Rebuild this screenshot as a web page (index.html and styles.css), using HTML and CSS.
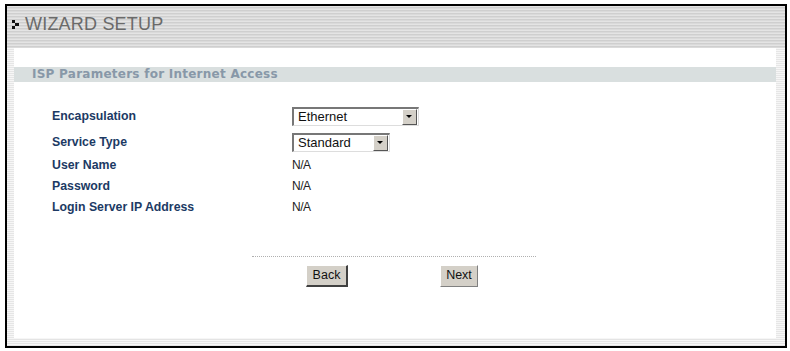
FILE: index.html
```html
<!DOCTYPE html>
<html>
<head>
<meta charset="utf-8">
<link rel="stylesheet" href="styles.css">
</head>
<body>
<div class="frame">
  <div class="header">
    <svg class="icon" width="7" height="9" viewBox="0 0 7 9"><rect x="0" y="0" width="3" height="3" fill="#111"/><rect x="3" y="3" width="4" height="3" fill="#111"/><rect x="0" y="6" width="3" height="3" fill="#111"/></svg>
    <span class="title">WIZARD SETUP</span>
  </div>
  <div class="body">
    <div class="side"></div>
    <div class="main">
      <div class="section">ISP Parameters for Internet Access</div>
      <div class="form">
        <div class="row r1"><span class="label">Encapsulation</span><span class="sel w1">Ethernet<span class="arrow"></span></span></div>
        <div class="row r2"><span class="label">Service Type</span><span class="sel w2">Standard<span class="arrow"></span></span></div>
        <div class="row r3"><span class="label">User Name</span><span class="val">N/A</span></div>
        <div class="row r4"><span class="label">Password</span><span class="val">N/A</span></div>
        <div class="row r5"><span class="label">Login Server IP Address</span><span class="val">N/A</span></div>
      </div>
      <div class="dots"></div>
      <div class="buttons">
        <span class="btn back">Back</span>
        <span class="btn next">Next</span>
      </div>
    </div>
    <div class="side right"></div>
  </div>
  <div class="footer"></div>
</div>
</body>
</html>
```
FILE: styles.css
```css
html, body { margin: 0; padding: 0; background: #fff; }
body { width: 790px; height: 351px; overflow: hidden; }
.frame {
  position: relative;
  margin: 4px 0 0 5px;
  width: 778px;
  height: 340px;
  border: 2px solid #000;
  display: flex;
  flex-direction: column;
  font-family: "Liberation Sans", Arial, sans-serif;
}
.header {
  height: 42px;
  background: repeating-linear-gradient(to bottom, #e4e4e4 0px, #e4e4e4 1px, #cfcfcf 1px, #cfcfcf 2px, #dadada 2px, #dadada 3px);
  display: flex;
  align-items: flex-start;
  padding: 9px 0 0 5px;
  box-sizing: border-box;
}
.icon { margin-top: 5px; margin-right: 6px; }
.title { font-size: 18px; color: #6a6a6a; line-height: 18px; letter-spacing: 0.2px; }
.body { flex: 1; display: flex; }
.side {
  width: 7px;
  background: repeating-linear-gradient(to bottom, #f6f6f6 0px, #f6f6f6 1px, #e6e6e6 1px, #e6e6e6 2px);
}
.side.right { width: 9px; }
.main { flex: 1; background: #fff; display: flex; flex-direction: column; }
.section {
  margin-top: 19px;
  height: 15px;
  background: #d9dfdf;
  font-family: "DejaVu Sans", Verdana, sans-serif;
  font-weight: bold;
  font-size: 12px;
  line-height: 15px;
  color: #8898a8;
  padding-left: 18px;
  letter-spacing: 0.25px;
}
.form { padding-left: 38px; margin-top: 24px; }
.row { display: flex; align-items: center; }
.label { width: 240px; font-weight: bold; font-size: 12.3px; color: #1c3a64; }
.r1 { height: 20px; }
.r2 { height: 20px; margin-top: 6px; }
.r3 { height: 14px; margin-top: 6px; }
.r4, .r5 { height: 14px; margin-top: 7px; }
.val { font-size: 12px; color: #222; letter-spacing: -0.5px; }
.sel {
  position: relative;
  height: 19px;
  box-sizing: border-box;
  border-top: 2px solid #777;
  border-left: 2px solid #777;
  border-right: 1px solid #ddd;
  border-bottom: 1px solid #ddd;
  font-size: 13px;
  line-height: 16px;
  padding-left: 4px;
  color: #111;
  background: #fff;
}
.w1 { width: 127px; }
.w2 { width: 98px; }
.arrow {
  position: absolute;
  right: 1px;
  top: 0px;
  width: 15px;
  height: 16px;
  box-sizing: border-box;
  background: #d4d0c8;
  border-top: 1px solid #fff;
  border-left: 1px solid #fff;
  border-right: 1px solid #555;
  border-bottom: 1px solid #555;
}
.arrow::after {
  content: "";
  position: absolute;
  left: 3px;
  top: 5px;
  border-left: 3px solid transparent;
  border-right: 3px solid transparent;
  border-top: 3px solid #000;
}
.dots {
  margin: 42px 0 0 238px;
  width: 284px;
  height: 0;
  border-top: 1px dotted #b0b0b0;
}
.buttons { display: flex; margin-top: 8px; padding-left: 292px; }
.btn {
  box-sizing: border-box;
  height: 22px;
  background: #d4d0c8;
  border-top: 1px solid #fff;
  border-left: 1px solid #fff;
  border-right: 2px solid #404040;
  border-bottom: 2px solid #404040;
  font-size: 12.5px;
  line-height: 19px;
  color: #111;
  text-align: center;
}
.back { width: 42px; }
.next { width: 38px; margin-left: 92px; border-right-width: 1px; border-bottom-width: 1px; border-right-color: #808080; border-bottom-color: #808080; }
.footer {
  height: 8px;
  background: repeating-linear-gradient(to bottom, #f6f6f6 0px, #f6f6f6 1px, #e4e4e4 1px, #e4e4e4 2px);
}
```
